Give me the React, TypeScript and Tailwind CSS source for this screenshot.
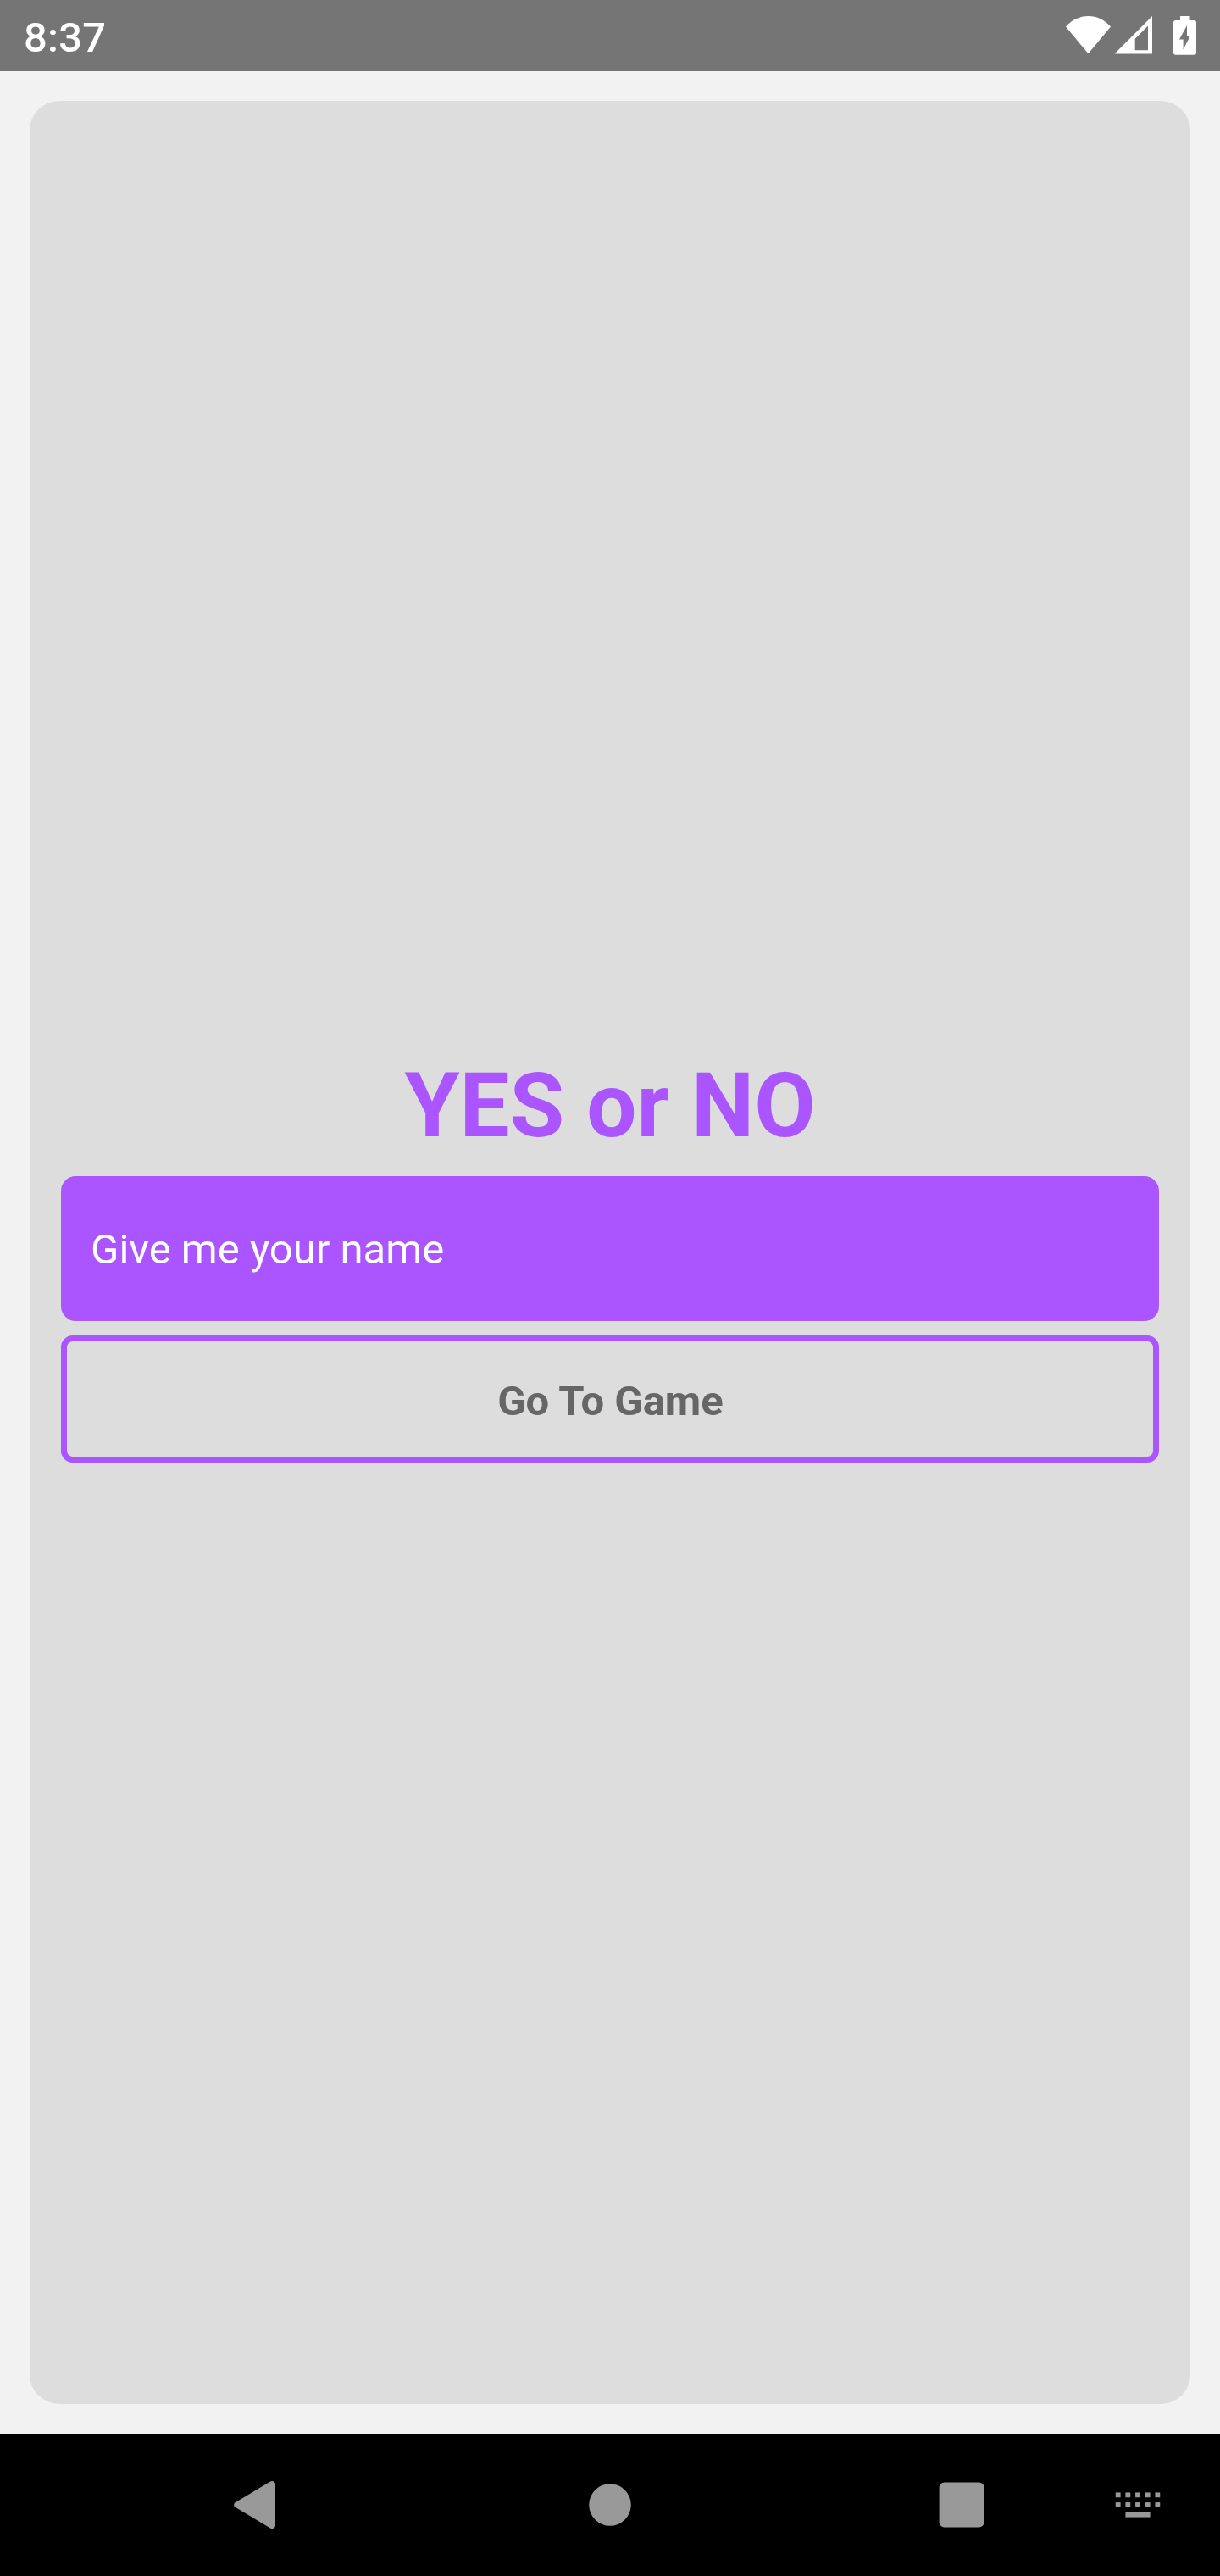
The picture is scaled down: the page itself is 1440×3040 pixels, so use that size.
function StatusBar() {
  return (
    <header className="flex h-[84px] shrink-0 items-start justify-between bg-[#757575] px-[28px] text-white">
      <span className="mt-[16px] text-[49px] leading-[57px] font-medium tracking-[0.2px]">8:37</span>
      <div className="mt-[14px] flex">
        <svg width="53" height="56" viewBox="0 0 53 56" fill="currentColor">
          <path d="M26.5 49.3 0 17.5C7 9.5 16.5 5 26.5 5S46 9.5 53 17.5Z" />
        </svg>
        <svg className="ml-[4px]" width="45" height="56" viewBox="0 0 45 56" fill="currentColor" fillRule="evenodd">
          <path d="M.5 49.5 45 5V49.5ZM24.7 31.7V45.3H40V16.4Z" />
        </svg>
        <svg className="ml-[25px]" width="27" height="56" viewBox="0 0 27 56" fill="currentColor" fillRule="evenodd">
          <path d="M8 5H19.5V10H24.3A2.7 2.7 0 0 1 27 12.7V48.1A2.7 2.7 0 0 1 24.3 50.8H2.7A2.7 2.7 0 0 1 0 48.1V12.7A2.7 2.7 0 0 1 2.7 10H8ZM16 16 7 32.4H11.6V44.5L20 28H16Z" />
        </svg>
      </div>
    </header>
  );
}

const KEY_COLUMNS = [3, 7, 11, 15, 19];

function NavigationBar() {
  return (
    <nav className="flex h-[168px] shrink-0 items-center bg-black pl-[265px] text-[#999]">
      <svg width="70" height="70" viewBox="0 0 70 70" fill="currentColor">
        <path d="M12.7 32.2 54 7.6C57 6 60 7.5 60 11V59C60 62.5 57 64 54 62.4L12.7 37.8C10.5 36.4 10.5 33.6 12.7 32.2Z" />
      </svg>
      <svg className="ml-[350px]" width="70" height="70" viewBox="0 0 70 70" fill="currentColor">
        <circle cx="35" cy="35" r="24.8" />
      </svg>
      <svg className="ml-[345px]" width="70" height="70" viewBox="0 0 70 70" fill="currentColor">
        <rect x="8.6" y="8.5" width="53" height="53" rx="6" />
      </svg>
      <svg className="ml-[138px]" width="70" height="70" viewBox="0 0 24 24" fill="currentColor">
        {KEY_COLUMNS.map((x) => (
          <g key={x}>
            <rect x={x} y="7" width="2" height="2" />
            <rect x={x} y="11" width="2" height="2" />
          </g>
        ))}
        <rect x="7" y="15" width="10" height="2" />
      </svg>
    </nav>
  );
}

export default function App() {
  return (
    <div className="flex h-[3040px] w-[1440px] flex-col bg-[#f2f2f2] font-['Roboto',sans-serif]">
      <StatusBar />
      <main className="m-[35px] flex flex-1 flex-col justify-center rounded-[35px] bg-[#ddd] px-[37px]">
        <h1 className="mb-[21px] pt-[14px] text-center text-[105px] leading-[123px] font-bold text-[#a5f]">
          YES or NO
        </h1>
        <input
          type="text"
          placeholder="Give me your name"
          className="h-[171px] w-full rounded-[17.5px] bg-[#a5f] px-[35px] pt-[1px] text-[49px] text-white outline-none placeholder:text-white"
        />
        <button
          type="button"
          className="mt-[17px] h-[150px] w-full rounded-[14px] border-[7px] border-[#a5f] pt-[5px] pl-[1px] text-center text-[49px] leading-[57px] font-bold text-[#666]"
        >
          Go To Game
        </button>
      </main>
      <NavigationBar />
    </div>
  );
}
